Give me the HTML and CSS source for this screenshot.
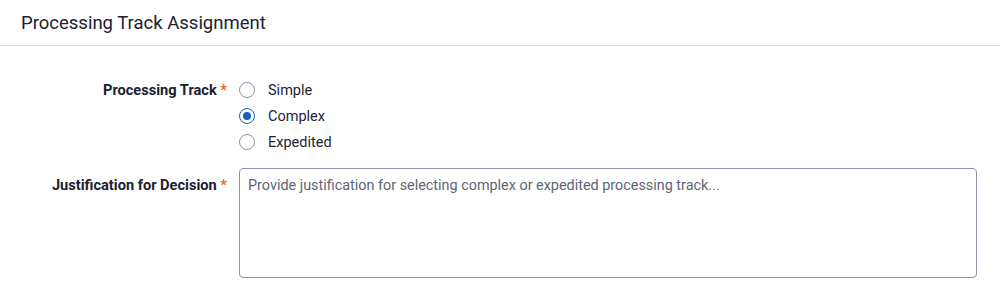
FILE: index.html
```html
<!DOCTYPE html>
<html lang="en">
<head>
    <meta charset="UTF-8">
    <meta name="viewport" content="width=device-width, initial-scale=1.0">
    <title>Processing Track Assignment</title>
    <link rel="stylesheet" href="styles.css">
</head>
<body>
    <header class="panel-header">
        <h1>Processing Track Assignment</h1>
    </header>

    <main class="panel-body">
        <div class="field">
            <span class="field-label">Processing Track <span class="required">*</span></span>
            <div class="radio-group">
                <label class="radio-option">
                    <input type="radio" name="track" value="simple">
                    <span>Simple</span>
                </label>
                <label class="radio-option">
                    <input type="radio" name="track" value="complex" checked>
                    <span>Complex</span>
                </label>
                <label class="radio-option">
                    <input type="radio" name="track" value="expedited">
                    <span>Expedited</span>
                </label>
            </div>
        </div>

        <div class="field field-textarea">
            <label class="field-label" for="justification">Justification for Decision <span class="required">*</span></label>
            <textarea id="justification" placeholder="Provide justification for selecting complex or expedited processing track..."></textarea>
        </div>
    </main>
</body>
</html>
```

FILE: styles.css
```css
body {
    font-family: Roboto, "Liberation Sans", sans-serif;
    margin: 0;
    padding: 0;
    background-color: #fff;
    color: #1d2433;
}

.panel-header {
    height: 45px;
    display: flex;
    align-items: center;
    padding: 0 21px;
    border-bottom: 1px solid #dadee6;
}

.panel-header h1 {
    margin: 0;
    font-size: 18.5px;
    font-weight: 400;
    color: #1b2130;
}

.panel-body {
    padding: 31px 23px 0 0;
}

.field {
    display: grid;
    grid-template-columns: 227px 1fr;
    column-gap: 12px;
}

.field-label {
    text-align: right;
    font-size: 14.6px;
    font-weight: 700;
    line-height: 26px;
    color: #1b2130;
}

.required {
    color: #ea6a1f;
}

.radio-group {
    display: flex;
    flex-direction: column;
}

.radio-option {
    display: flex;
    align-items: center;
    gap: 13px;
    height: 26px;
    font-size: 14.5px;
    color: #1d2433;
    cursor: pointer;
}

.radio-option input {
    appearance: none;
    -webkit-appearance: none;
    width: 16px;
    height: 16px;
    margin: 0;
    border: 1px solid #8c95a5;
    border-radius: 50%;
    background: #fff;
    position: relative;
}

.radio-option input:checked {
    border: 1.5px solid #1560bd;
}

.radio-option input:checked::after {
    content: "";
    position: absolute;
    top: 2.5px;
    left: 2.5px;
    width: 8px;
    height: 8px;
    border-radius: 50%;
    background: #1560bd;
}

.field-textarea {
    margin-top: 13px;
}

.field-textarea .field-label {
    padding-top: 4px;
}

textarea {
    height: 110px;
    box-sizing: border-box;
    padding: 7px 8px;
    border: 1px solid #8c95a5;
    border-radius: 4px;
    font-family: Roboto, "Liberation Sans", sans-serif;
    font-size: 14.4px;
    line-height: 20px;
    color: #1d2433;
    resize: none;
}

textarea::placeholder {
    color: #5d6676;
}
```
